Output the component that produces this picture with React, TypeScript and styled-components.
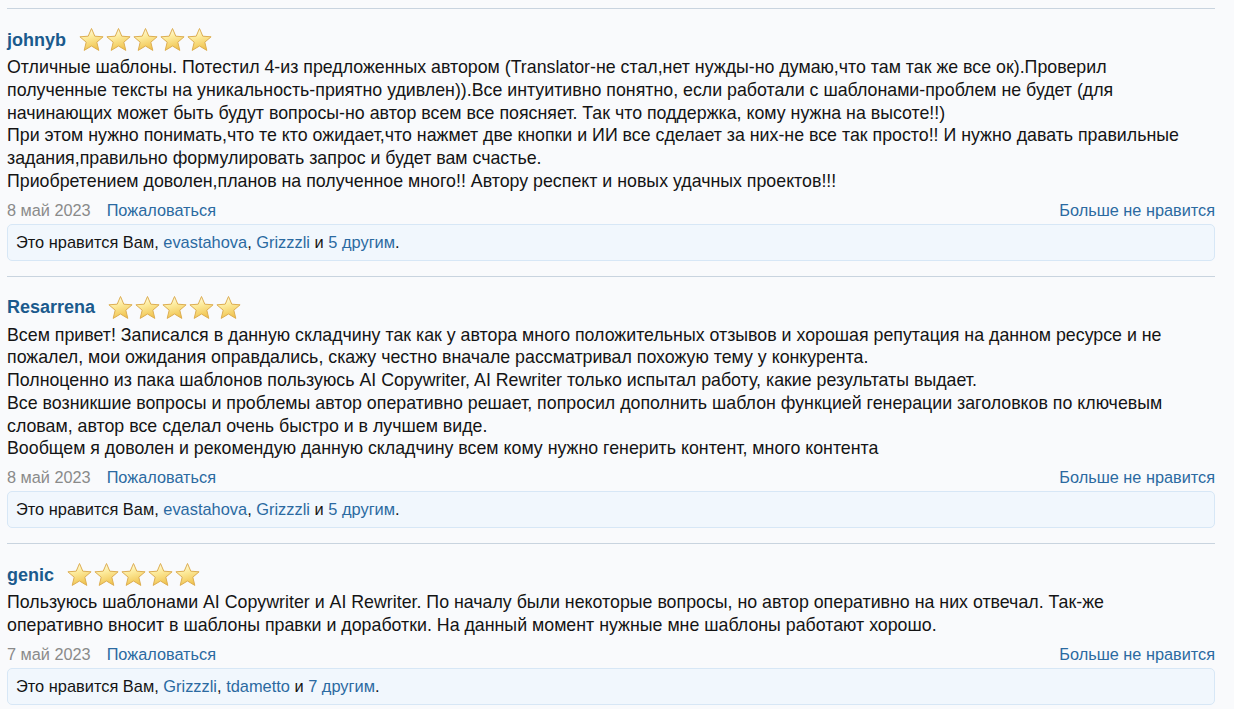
import styled, { createGlobalStyle } from 'styled-components';

const GlobalStyle = createGlobalStyle`
  html, body {
    margin: 0;
    padding: 0;
    background: #f9fafc;
  }
  body {
    font-family: "Liberation Sans", Arial, sans-serif;
    color: #141414;
  }
`;

const Page = styled.div`
  padding: 8px 19px 0 7px;
`;

const Review = styled.div`
  border-top: 1px solid #c9d4df;
  padding: 18px 0 15px;
`;

const Header = styled.div`
  display: flex;
  align-items: center;
  gap: 12px;
  height: 26px;
`;

const UserName = styled.a`
  font-size: 18px;
  font-weight: bold;
  color: #1b5a8d;
  text-decoration: none;
`;

const Stars = styled.div`
  display: flex;
`;

const Body = styled.div`
  margin-top: 3px;
  font-size: 17.8px;
  line-height: 22.75px;
`;

const Line = styled.div`
  white-space: nowrap;
`;

const Footer = styled.div`
  display: flex;
  align-items: center;
  justify-content: space-between;
  font-size: 16.3px;
  line-height: 20px;
  margin-top: 7px;
`;

const Meta = styled.div`
  display: flex;
  gap: 16px;
`;

const DateText = styled.span`
  color: #8a8a8a;
`;

const Link = styled.a`
  color: #2b6aa1;
  text-decoration: none;
`;

const Likes = styled.div`
  margin-top: 4px;
  height: 37px;
  box-sizing: border-box;
  display: flex;
  align-items: center;
  padding: 0 8px;
  font-size: 16.4px;
  background: #f1f7fd;
  border: 1px solid #d7e7f6;
  border-radius: 5px;
`;

function Star() {
  return (
    <svg width="27" height="26" viewBox="0 0 27 26">
      <defs>
        <linearGradient id="starFill" x1="0.2" y1="0" x2="0.5" y2="1">
          <stop offset="0" stopColor="#fffef2" />
          <stop offset="0.4" stopColor="#fdec9f" />
          <stop offset="1" stopColor="#f0c34e" />
        </linearGradient>
      </defs>
      <polygon
        points="13.5,1.5 16.8,9.2 25.1,9.8 18.8,15.2 20.8,23.4 13.5,19 6.2,23.4 8.2,15.2 1.9,9.8 10.2,9.2"
        fill="url(#starFill)"
        stroke="#ddae52"
        strokeWidth="1"
        strokeLinejoin="round"
      />
    </svg>
  );
}

type ReviewData = {
  user: string;
  date: string;
  lines: string[];
  likedBy: string[];
  others: string;
};

// visual lines as they wrap in the original
const reviews: ReviewData[] = [
  {
    user: 'johnyb',
    date: '8 май 2023',
    lines: [
      'Отличные шаблоны. Потестил 4-из предложенных автором (Translator-не стал,нет нужды-но думаю,что там так же все ок).Проверил',
      'полученные тексты на уникальность-приятно удивлен)).Все интуитивно понятно, если работали с шаблонами-проблем не будет (для',
      'начинающих может быть будут вопросы-но автор всем все поясняет. Так что поддержка, кому нужна на высоте!!)',
      'При этом нужно понимать,что те кто ожидает,что нажмет две кнопки и ИИ все сделает за них-не все так просто!! И нужно давать правильные',
      'задания,правильно формулировать запрос и будет вам счастье.',
      'Приобретением доволен,планов на полученное много!! Автору респект и новых удачных проектов!!!',
    ],
    likedBy: ['evastahova', 'Grizzzli'],
    others: '5 другим',
  },
  {
    user: 'Resarrena',
    date: '8 май 2023',
    lines: [
      'Всем привет! Записался в данную складчину так как у автора много положительных отзывов и хорошая репутация на данном ресурсе и не',
      'пожалел, мои ожидания оправдались, скажу честно вначале рассматривал похожую тему у конкурента.',
      'Полноценно из пака шаблонов пользуюсь AI Copywriter, AI Rewriter только испытал работу, какие результаты выдает.',
      'Все возникшие вопросы и проблемы автор оперативно решает, попросил дополнить шаблон функцией генерации заголовков по ключевым',
      'словам, автор все сделал очень быстро и в лучшем виде.',
      'Вообщем я доволен и рекомендую данную складчину всем кому нужно генерить контент, много контента',
    ],
    likedBy: ['evastahova', 'Grizzzli'],
    others: '5 другим',
  },
  {
    user: 'genic',
    date: '7 май 2023',
    lines: [
      'Пользуюсь шаблонами AI Copywriter и AI Rewriter. По началу были некоторые вопросы, но автор оперативно на них отвечал. Так-же',
      'оперативно вносит в шаблоны правки и доработки. На данный момент нужные мне шаблоны работают хорошо.',
    ],
    likedBy: ['Grizzzli', 'tdametto'],
    others: '7 другим',
  },
];

export default function App() {
  return (
    <>
      <GlobalStyle />
      <Page>
        {reviews.map((r) => (
          <Review key={r.user}>
            <Header>
              <UserName href="#">{r.user}</UserName>
              <Stars>
                {[0, 1, 2, 3, 4].map((i) => (
                  <Star key={i} />
                ))}
              </Stars>
            </Header>
            <Body>
              {r.lines.map((l, i) => (
                <Line key={i}>{l}</Line>
              ))}
            </Body>
            <Footer>
              <Meta>
                <DateText>{r.date}</DateText>
                <Link href="#">Пожаловаться</Link>
              </Meta>
              <Link href="#">Больше не нравится</Link>
            </Footer>
            <Likes>
              <span>
                Это нравится Вам, <Link href="#">{r.likedBy[0]}</Link>,{' '}
                <Link href="#">{r.likedBy[1]}</Link> и{' '}
                <Link href="#">{r.others}</Link>.
              </span>
            </Likes>
          </Review>
        ))}
      </Page>
    </>
  );
}
